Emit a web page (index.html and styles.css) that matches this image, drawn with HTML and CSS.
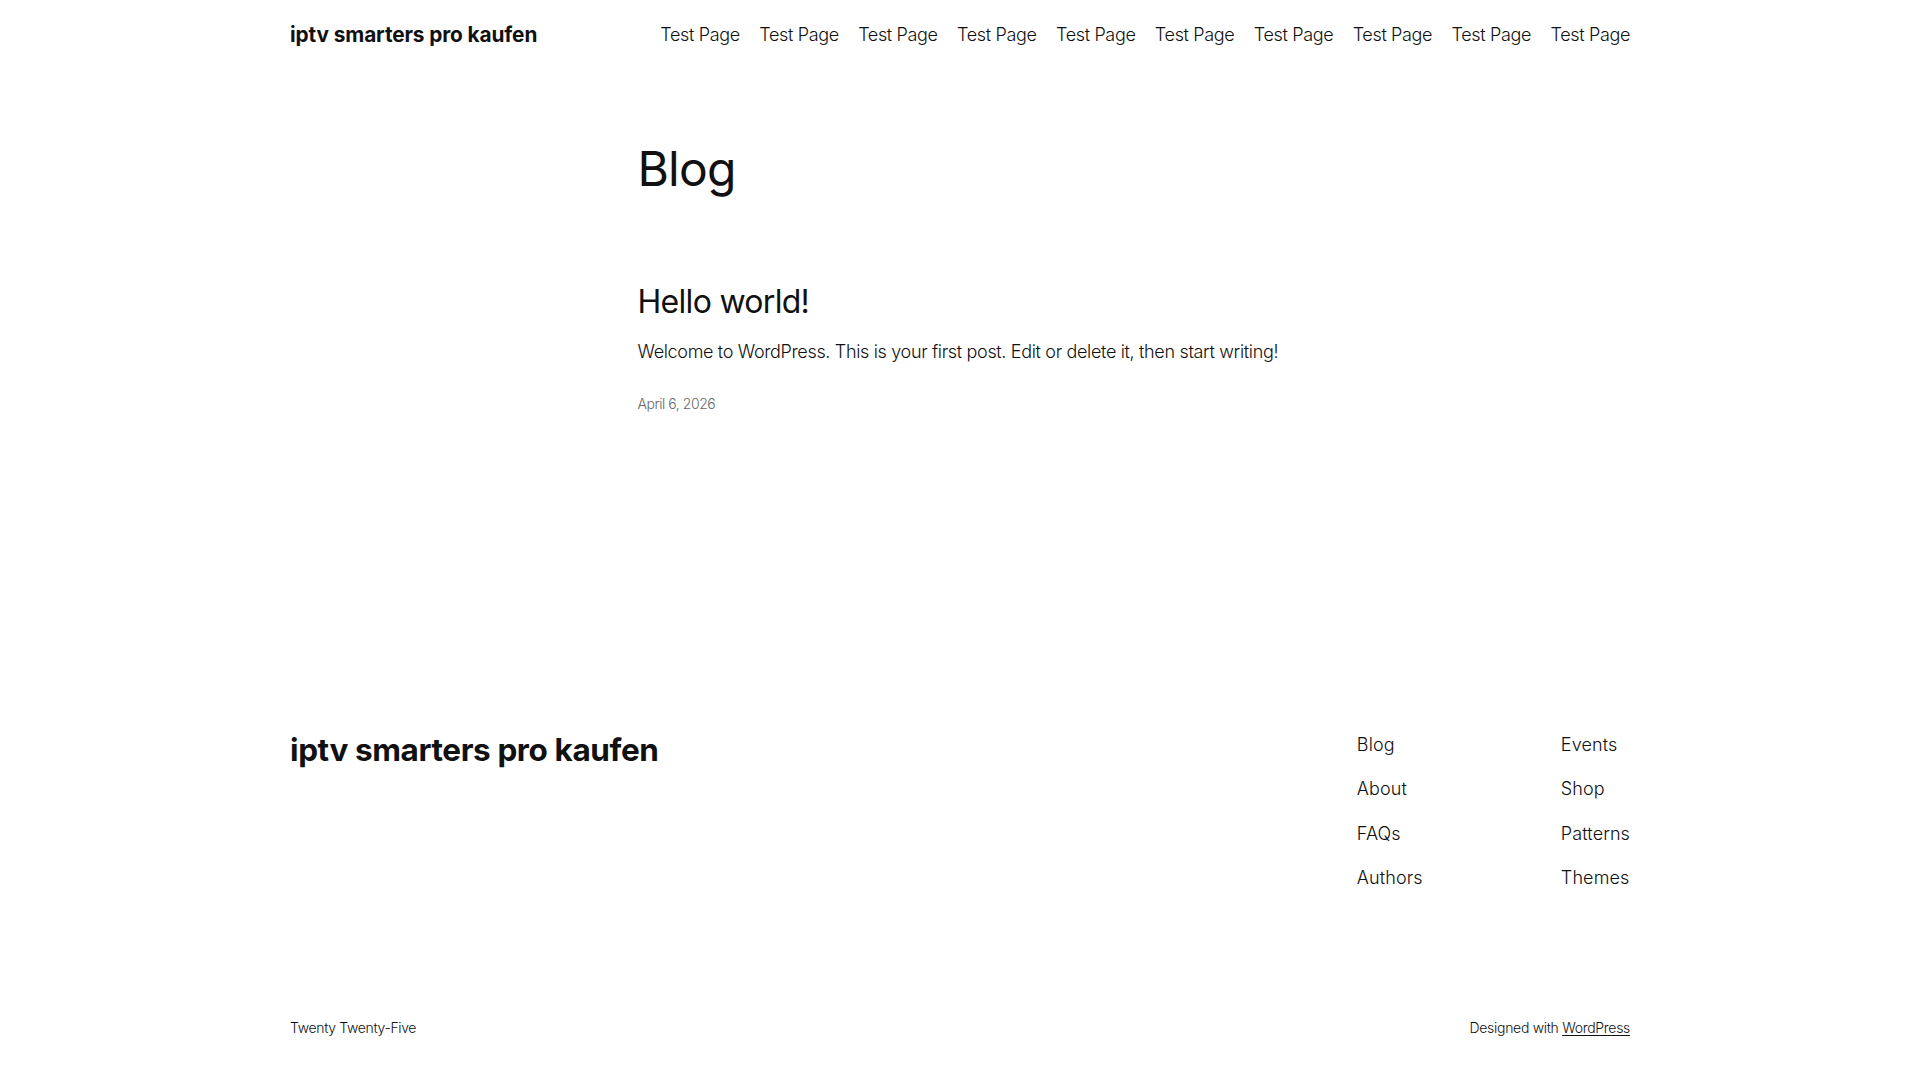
FILE: index.html
```html
<!DOCTYPE html>
<html lang="en">
<head>
<meta charset="utf-8">
<title>Blog – iptv smarters pro kaufen</title>
<link rel="stylesheet" href="styles.css">
</head>
<body>
<header class="site-header">
  <div class="wide header-row">
    <a class="site-title" href="#">iptv smarters pro kaufen</a>
    <nav class="main-nav">
      <a href="#">Test Page</a>
      <a href="#">Test Page</a>
      <a href="#">Test Page</a>
      <a href="#">Test Page</a>
      <a href="#">Test Page</a>
      <a href="#">Test Page</a>
      <a href="#">Test Page</a>
      <a href="#">Test Page</a>
      <a href="#">Test Page</a>
      <a href="#">Test Page</a>
    </nav>
  </div>
</header>

<main class="content">
  <h1 class="page-title">Blog</h1>
  <article class="post">
    <h2 class="post-title"><a href="#">Hello world!</a></h2>
    <p class="post-excerpt">Welcome to WordPress. This is your first post. Edit or delete it, then start writing!</p>
    <time class="post-date">April 6, 2026</time>
  </article>
</main>

<footer class="site-footer">
  <div class="wide footer-top">
    <a class="footer-title" href="#">iptv smarters pro kaufen</a>
    <div class="footer-navs">
      <nav class="footer-col">
        <a href="#">Blog</a>
        <a href="#">About</a>
        <a href="#">FAQs</a>
        <a href="#">Authors</a>
      </nav>
      <nav class="footer-col">
        <a href="#">Events</a>
        <a href="#">Shop</a>
        <a href="#">Patterns</a>
        <a href="#">Themes</a>
      </nav>
    </div>
  </div>
  <div class="wide footer-bottom">
    <span class="credit">Twenty Twenty-Five</span>
    <span class="designed">Designed with <a class="underline" href="#">WordPress</a></span>
  </div>
</footer>
</body>
</html>
```

FILE: styles.css
```css
* {
  box-sizing: border-box;
}

html, body {
  margin: 0;
  padding: 0;
}

body {
  background: #ffffff;
  color: #111111;
  font-family: Inter, "Noto Sans", "Liberation Sans", sans-serif;
  font-weight: 300;
  font-size: 18px;
  line-height: 1.6;
}

a {
  color: inherit;
  text-decoration: none;
}

.wide {
  width: 1340px;
  margin: 0 auto;
}

/* Header */
.header-row {
  height: 70px;
  display: flex;
  align-items: center;
  justify-content: space-between;
}

.site-title {
  font-size: 20.8px;
  font-weight: 700;
  letter-spacing: -0.1px;
  line-height: 1.3;
}

.main-nav {
  display: flex;
  gap: 19.4px;
  font-size: 18px;
  line-height: 1.4;
  letter-spacing: -0.35px;
}

/* Content */
.content {
  width: 645px;
  margin: 0 auto;
}

.page-title {
  margin: 70px 0 0;
  font-size: 48px;
  font-weight: 400;
  line-height: 1.2;
  letter-spacing: -0.8px;
}

.post {
  margin-top: 85px;
}

.post-title {
  margin: 0;
  font-size: 32px;
  font-weight: 400;
  line-height: 1.2;
  letter-spacing: -0.7px;
}

.post-excerpt {
  margin: 17px 0 0;
  font-size: 18px;
  line-height: 1.6;
  letter-spacing: -0.34px;
  white-space: nowrap;
}

.post-date {
  display: block;
  margin-top: 26px;
  font-size: 14px;
  line-height: 1.6;
  color: #686868;
  letter-spacing: -0.45px;
}

/* Footer */
.site-footer {
  margin-top: 316px;
}

.footer-top {
  display: flex;
  justify-content: space-between;
  align-items: flex-start;
}

.footer-title {
  margin-top: 0;
  font-size: 31.5px;
  font-weight: 700;
  line-height: 1.2;
  letter-spacing: -0.4px;
}

.footer-navs {
  display: grid;
  grid-template-columns: 204px auto;
}

.footer-col {
  display: flex;
  flex-direction: column;
  gap: 15.5px;
  font-size: 18px;
  line-height: 1.6;
  letter-spacing: 0.1px;
}

.footer-bottom {
  margin-top: 124px;
  display: flex;
  justify-content: space-between;
  font-size: 14px;
  line-height: 1.6;
  letter-spacing: -0.1px;
}

.credit {
  letter-spacing: -0.35px;
}

.designed {
  letter-spacing: -0.3px;
}

.underline {
  text-decoration: underline;
  text-underline-offset: 2px;
}
```
